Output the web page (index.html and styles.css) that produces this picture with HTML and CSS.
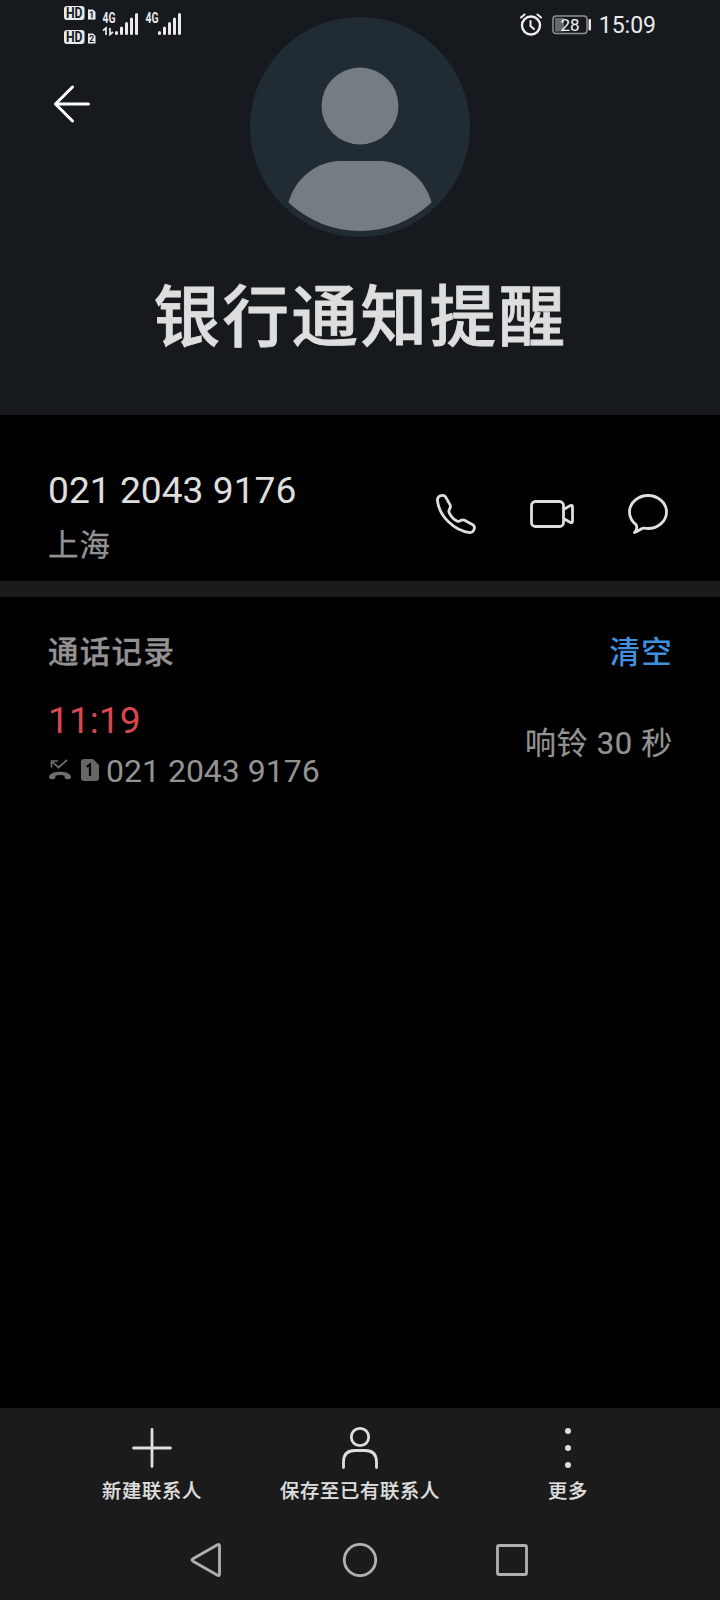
FILE: index.html
```html
<!DOCTYPE html>
<html lang="zh-CN">
<head>
    <meta charset="UTF-8">
    <meta name="viewport" content="width=device-width, initial-scale=1.0">
    <title>银行通知提醒</title>
    <link rel="stylesheet" href="styles.css">
</head>
<body>

    <div class="screen">
        <!-- Header -->
        <header class="header">
            <div class="header-left">
                <svg class="signals" width="120" height="44" viewBox="64 0 120 44">
                    <g fill="#e8eaec">
                        <rect x="64" y="6" width="20.500" height="14" rx="3"/>
                        <rect x="64" y="30" width="20.500" height="14" rx="3"/>
                        <path d="M88 9.500h5l2.500 2.500V19.500h-7.500z"/>
                        <path d="M88 33.500h5l2.500 2.500V43.500h-7.500z"/>
                    </g>
                    <g class="hd-text">
                        <text x="66" y="18" textLength="16.500" lengthAdjust="spacingAndGlyphs">HD</text>
                        <text x="66" y="42" textLength="16.500" lengthAdjust="spacingAndGlyphs">HD</text>
                    </g>
                    <g class="sim-text">
                        <text x="91.600" y="18">1</text>
                        <text x="91.600" y="42">2</text>
                    </g>
                    <g class="net-text">
                        <text x="102.500" y="23" textLength="13" lengthAdjust="spacingAndGlyphs">4G</text>
                        <text x="145.500" y="23" textLength="13" lengthAdjust="spacingAndGlyphs">4G</text>
                    </g>
                    <path d="M103 30.500l3-2.500v7M110 28v6.500l3-2.500" fill="none" stroke="#e8eaec" stroke-width="1.700"/>
                    <g stroke="#e8eaec" stroke-width="3" stroke-linecap="round">
                        <path d="M116.500 32.500v1M121.500 28v5.500M126.500 23.500v10M131.500 19v14.500M136.500 14.500v19"/>
                        <path d="M159.500 32.500v1M164.500 28v5.500M169.500 23.500v10M174.500 19v14.500M179.500 14.500v19"/>
                    </g>
                </svg>
                <svg class="back" width="38" height="38" viewBox="0 0 38 38">
                    <path d="M19.500 2L2.500 19l17 17M2.500 19h33" fill="none" stroke="#fff" stroke-width="3" stroke-linecap="round" stroke-linejoin="round"/>
                </svg>
            </div>

            <svg class="avatar" width="220" height="220" viewBox="0 0 220 220">
                <circle cx="110" cy="110" r="110" fill="#212b33"/>
                <circle cx="110" cy="89" r="38.500" fill="#757c82"/>
                <path d="M38.500 185.500C45 160.500 68 144 90 144h40c22 0 45 16.500 51.500 41.500C161 204.500 136 214 110 214S59 204.500 38.500 185.500z" fill="#757c82"/>
            </svg>

            <div class="header-right">
                <svg width="22" height="24" viewBox="0 0 22 24">
                    <g fill="none" stroke="#eceef0" stroke-linecap="round">
                        <circle cx="11" cy="12.500" r="9" stroke-width="2.400"/>
                        <path d="M10.500 8v5l3.500 3" stroke-width="2"/>
                        <path d="M1 4.500L4.500 1.500M21 4.500L17.500 1.500" stroke-width="2"/>
                    </g>
                </svg>
                <svg width="40" height="20" viewBox="0 0 40 20">
                    <rect x="1" y="1" width="34" height="17.500" rx="3" fill="none" stroke="#8e9194" stroke-width="1.500"/>
                    <path d="M3 3h9v13.500H3z" fill="#66696c"/>
                    <rect x="36.500" y="4" width="2.500" height="11.500" rx="1" fill="#e8eaec"/>
                    <text class="battery-text" x="18" y="15.500" text-anchor="middle">28</text>
                </svg>
                <span class="clock">15:09</span>
            </div>

            <h1>银行通知提醒</h1>
        </header>

        <!-- Phone number -->
        <section class="contact">
            <div>
                <p class="number">021 2043 9176</p>
                <p class="place">上海</p>
            </div>
            <div class="actions">
                <svg width="40" height="40" viewBox="0 0 40 40">
                    <path d="M4.200 1.800L6.500 1.400Q8.500 1.200 9.600 3L14 10.600Q15 12.500 13.800 14.500Q12.300 17 13.200 18.800Q16 24.500 21 27Q22.800 27.900 24.500 26.700Q26.500 25.400 28.500 26.300L36.800 30.800Q39 32.200 38.300 34.600L37.800 36.200Q36.500 38.800 33.500 38.600C18 36.500 3.500 22.500 1.500 7Q1 3.200 4.200 1.800z"/>
                </svg>
                <svg width="44" height="28" viewBox="0 0 44 28">
                    <rect x="1.500" y="1.500" width="32" height="25" rx="4"/>
                    <path d="M33.500 9.500L40.500 5.500Q42.500 4.800 42.500 6.800V21.200Q42.500 23.200 40.500 22.500L33.500 18.500"/>
                </svg>
                <svg width="40" height="40" viewBox="0 0 40 40">
                    <path d="M6.500 38.500C8.800 36 9.200 33 8.200 30.800C4 27.500 1.500 23 1.500 18C1.500 9 9.800 1.500 20 1.500S38.500 9 38.500 18S30.200 34.500 20 34.500C18.500 34.500 17.200 34.300 15.800 34.100C13 34.200 10 37.500 6.500 38.500z"/>
                </svg>
            </div>
        </section>

        <!-- Call log -->
        <section class="log">
            <div class="log-head">
                <h2>通话记录</h2>
                <a class="clear">清空</a>
            </div>
            <div class="log-row">
                <div>
                    <p class="time">11:19</p>
                    <div class="caller">
                        <svg width="24" height="22" viewBox="0 0 24 22">
                            <path d="M3.500 8.500V2H10M3.500 2L10.500 8.500L19 1" fill="none" stroke="#6f6f6f" stroke-width="1.700"/>
                            <path d="M1 17.500C2.500 14 7 12.800 12 12.800S21.500 14 23 17.500Q23.600 19.500 21.800 19.900L18.500 20.200Q17 20.200 16.700 18.500L16.500 16.700Q12 15.500 7.500 16.700L7.300 18.500Q7 20.200 5.500 20.200L2.200 19.900Q.4 19.500 1 17.500z" fill="#6f6f6f"/>
                        </svg>
                        <svg width="18" height="22" viewBox="0 0 18 22">
                            <path d="M3 0H12L18 6V19Q18 22 15 22H3Q0 22 0 19V3Q0 0 3 0z" fill="#666"/>
                            <path d="M5.800 7.800L9 5.500V17" fill="none" stroke="#000" stroke-width="2.200"/>
                        </svg>
                        <span>021 2043 9176</span>
                    </div>
                </div>
                <p class="duration">响铃 30 秒</p>
            </div>
        </section>

        <!-- Bottom toolbar -->
        <footer class="footer">
            <div class="tools">
                <div class="tool">
                    <svg width="44" height="44" viewBox="0 0 44 44">
                        <path d="M22 3.500v37M3.500 22h37"/>
                    </svg>
                    <span>新建联系人</span>
                </div>
                <div class="tool">
                    <svg width="44" height="44" viewBox="0 0 44 44">
                        <circle cx="22" cy="11" r="8.700"/>
                        <path d="M5.500 41.500V36Q5.500 24.500 17 24.500H27Q38.500 24.500 38.500 36V41.500"/>
                    </svg>
                    <span>保存至已有联系人</span>
                </div>
                <div class="tool">
                    <svg class="dots" width="44" height="44" viewBox="0 0 44 44">
                        <circle cx="22" cy="5" r="3"/>
                        <circle cx="22" cy="22" r="3"/>
                        <circle cx="22" cy="39" r="3"/>
                    </svg>
                    <span>更多</span>
                </div>
            </div>
            <nav class="nav">
                <svg width="36" height="36" viewBox="0 0 36 36">
                    <path d="M3 16.800L27.500 2.700Q29.500 1.800 29.500 3.800V32.200Q29.500 34.200 27.500 33.300L3 19.200Q1 18 3 16.800z"/>
                </svg>
                <svg width="36" height="36" viewBox="0 0 36 36">
                    <circle cx="18" cy="18" r="15.700"/>
                </svg>
                <svg width="36" height="36" viewBox="0 0 36 36">
                    <rect x="3.500" y="3.500" width="29" height="29" rx="1.500"/>
                </svg>
            </nav>
        </footer>
    </div>

</body>
</html>
```

FILE: styles.css
```css
* {
    margin: 0;
    padding: 0;
    box-sizing: border-box;
}

body {
    font-family: Roboto, 'Noto Sans CJK SC', sans-serif;
    background-color: #000;
    color: #dedede;
}

svg {
    display: block;
    flex-shrink: 0;
}

.screen {
    width: 720px;
    height: 1600px;
    display: flex;
    flex-direction: column;
}

/* Header */
.header {
    display: grid;
    grid-template-columns: 1fr 220px 1fr;
    grid-template-rows: 237px 1fr;
    height: 415px;
    background-color: #161a1e;
}

.header-left {
    padding-left: 64px;
}

.back {
    margin: 41px 0 0 -11px;
}

.avatar {
    margin-top: 17px;
}

.header-right {
    display: flex;
    align-items: center;
    justify-content: flex-end;
    height: 49px;
    padding-right: 64px;
}

.header-right svg + svg {
    margin-left: 10px;
}

.clock {
    margin-left: 7px;
    padding-top: 2px;
    font-size: 23px;
    line-height: 47px;
    color: #e8eaec;
}

.hd-text {
    font-size: 14px;
    font-weight: 700;
    fill: #161a1e;
}

.sim-text {
    font-size: 9px;
    font-weight: 700;
    text-anchor: middle;
    fill: #161a1e;
}

.net-text {
    font-size: 14px;
    font-weight: 700;
    fill: #e8eaec;
}

.battery-text {
    font-size: 17px;
    fill: #f0f2f4;
}

.header h1 {
    grid-column: 1 / -1;
    padding: 41px 0 0 1px;
    text-align: center;
    font-size: 66.5px;
    font-weight: 500;
    line-height: 80px;
    letter-spacing: 2.5px;
    -webkit-text-stroke: 0.8px #dedede;
}

/* Phone number */
.contact {
    display: flex;
    justify-content: space-between;
    height: 182px;
    padding: 50px 52px 0 48px;
    border-bottom: 16px solid #1b1b1b;
}

.number {
    font-size: 37.2px;
    line-height: 50px;
}

.place {
    margin-top: 11px;
    font-size: 30.5px;
    line-height: 40px;
    letter-spacing: 1px;
    color: #939393;
    -webkit-text-stroke: 0.3px #939393;
}

.actions {
    display: flex;
    align-items: center;
    height: 98px;
    gap: 54px;
}

.actions svg {
    fill: none;
    stroke: #dedede;
    stroke-width: 2.8;
    stroke-linejoin: round;
}

/* Call log */
.log {
    flex: 1;
    padding: 33px 48px 0;
    color: #939393;
}

.log-head,
.log-row {
    display: flex;
    justify-content: space-between;
}

.log-head {
    font-size: 30.5px;
    line-height: 46px;
    letter-spacing: 1.3px;
}

.log-head h2 {
    font-size: 30.5px;
    font-weight: 500;
    -webkit-text-stroke: 0.3px #939393;
}

.clear {
    margin-right: -1px;
    font-weight: 500;
    color: #4090e0;
}

.log-row {
    align-items: center;
    margin-top: 21px;
}

.time {
    font-size: 37.2px;
    line-height: 46px;
    color: #d8474e;
}

.caller {
    display: flex;
    align-items: center;
    margin-top: 6px;
    font-size: 32px;
    line-height: 44px;
}

.caller svg {
    margin-bottom: 3px;
}

.caller svg + svg {
    margin: 0 7px 3px 9px;
}

.duration {
    margin: -2px -1px 0 0;
    font-size: 31px;
    line-height: 46px;
    letter-spacing: 0.7px;
    -webkit-text-stroke: 0.2px #939393;
}

/* Bottom toolbar */
.footer {
    height: 192px;
    background-color: #1b1b1b;
}

.tools {
    display: grid;
    grid-template-columns: repeat(3, 208px);
    justify-content: center;
    padding-top: 18px;
}

.tool {
    display: flex;
    flex-direction: column;
    align-items: center;
    font-size: 19.3px;
    font-weight: 500;
    line-height: 28px;
    letter-spacing: 0.7px;
    -webkit-text-stroke: 0.2px #dedede;
}

.tool svg {
    margin-bottom: 8px;
    fill: none;
    stroke: #dedede;
    stroke-width: 2.8;
    stroke-linecap: round;
}

.tool .dots {
    fill: #dedede;
    stroke: none;
}

.nav {
    display: flex;
    justify-content: center;
    gap: 116px;
    margin-top: 36px;
}

.nav svg {
    fill: none;
    stroke: #b0b0b0;
    stroke-width: 2.8;
}
```
